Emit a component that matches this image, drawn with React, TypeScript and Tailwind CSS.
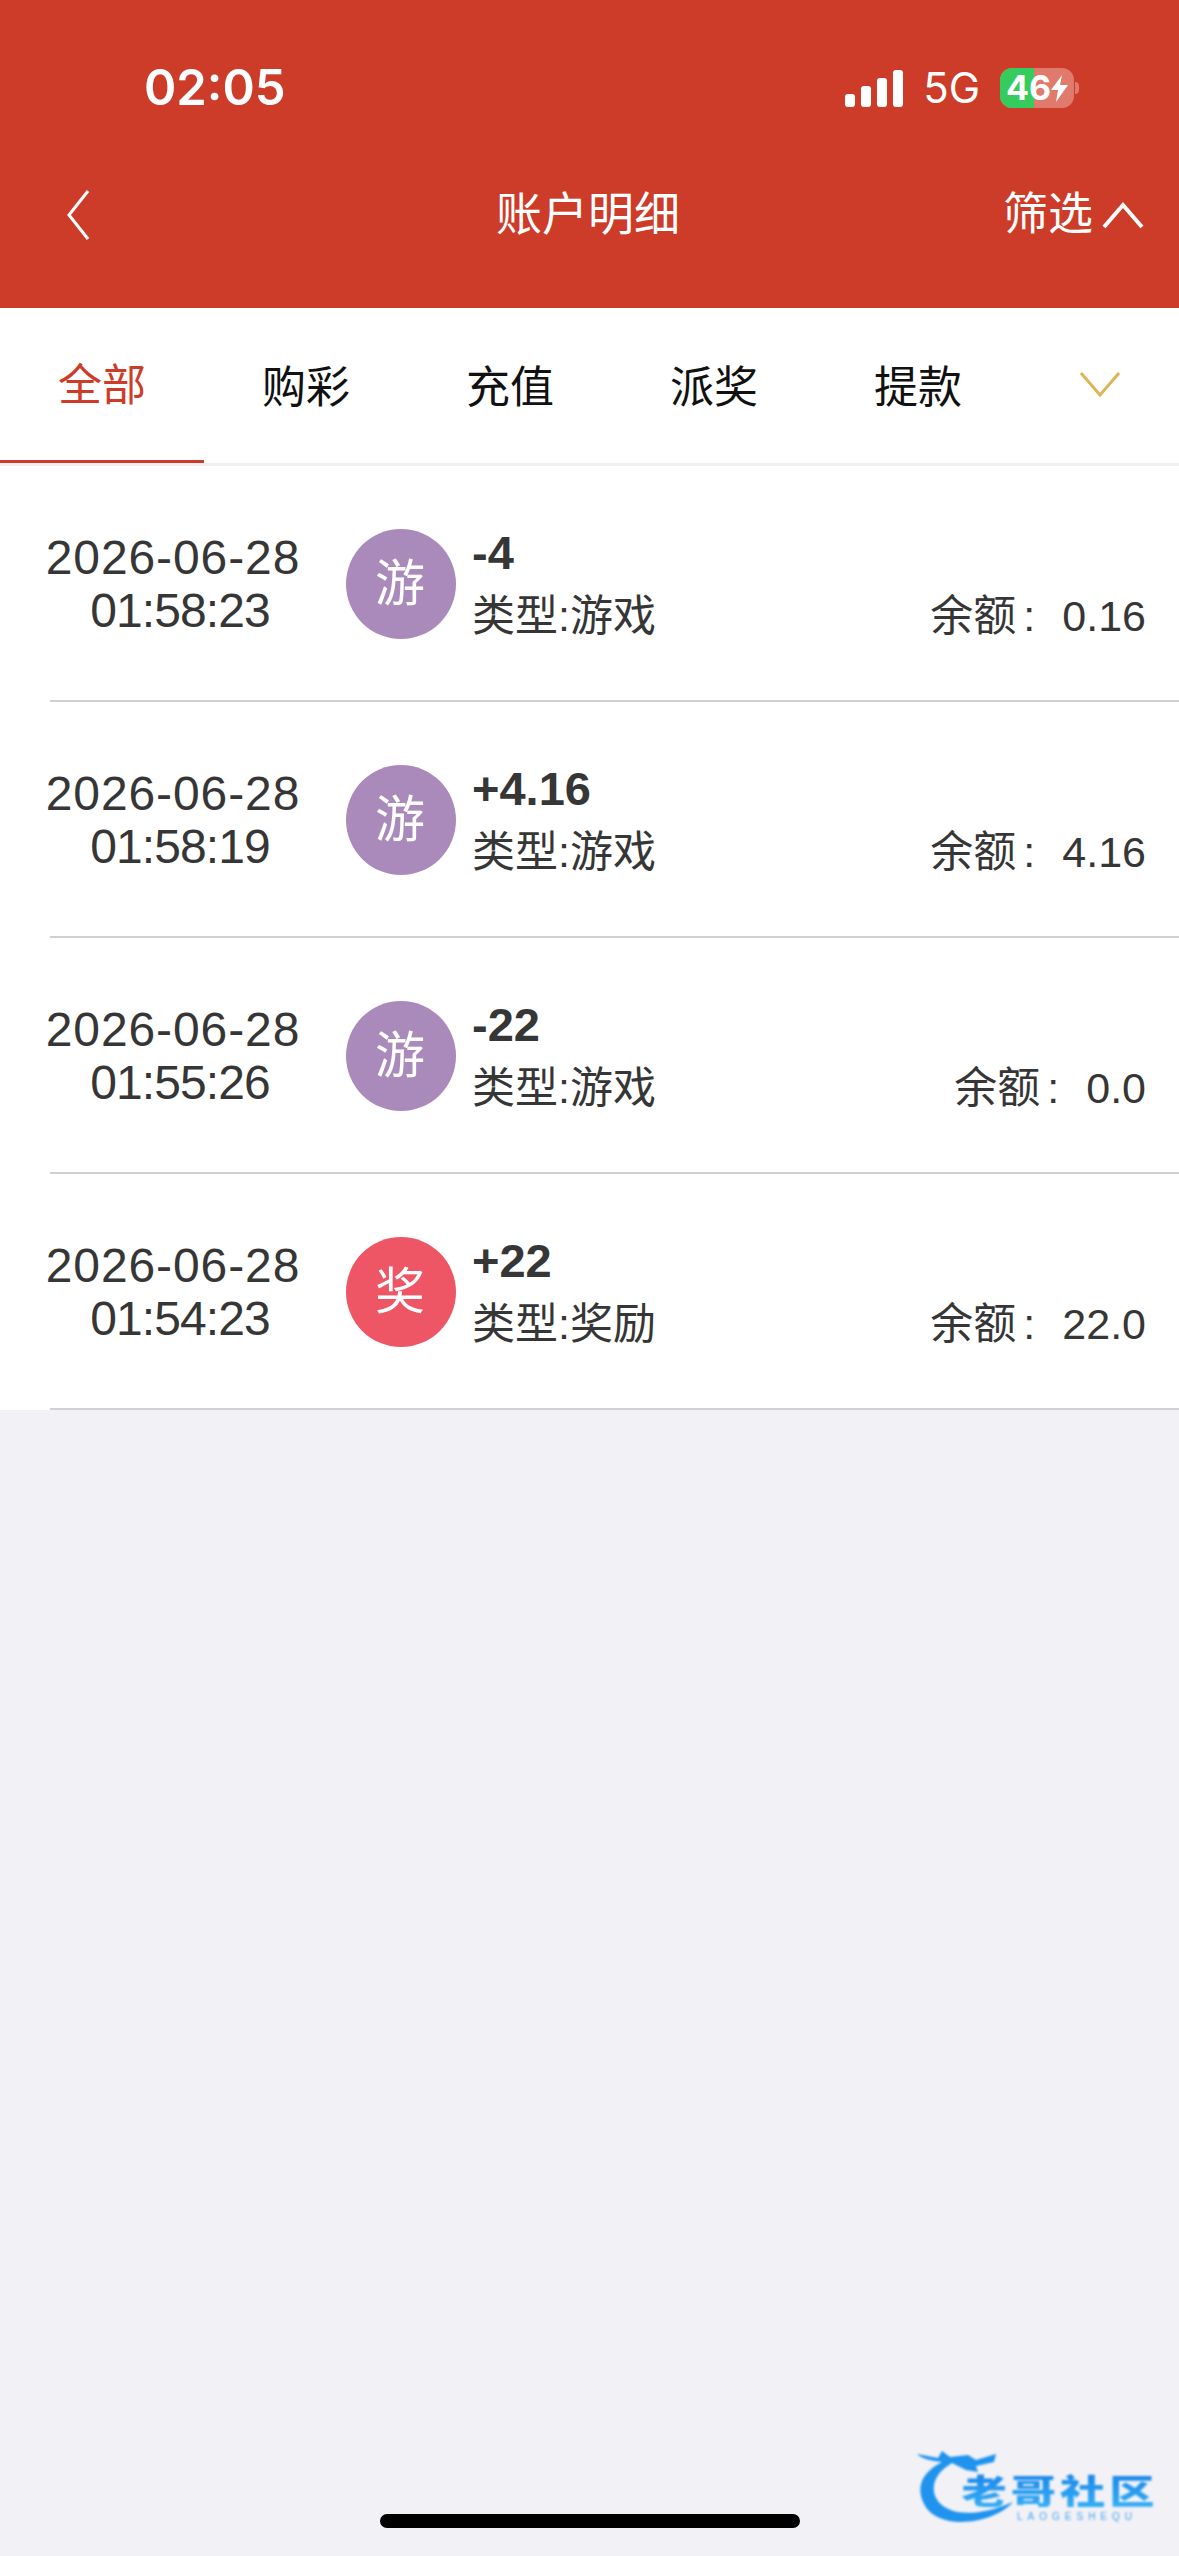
const font = "font-['Liberation_Sans','Noto_Sans_CJK_SC',sans-serif]";

const rows = [
  { date: "2026-06-28", time: "01:58:23", badge: "游", color: "bg-[#aa89bb]", amount: "-4", type: "类型:游戏", balance: "0.16" },
  { date: "2026-06-28", time: "01:58:19", badge: "游", color: "bg-[#aa89bb]", amount: "+4.16", type: "类型:游戏", balance: "4.16" },
  { date: "2026-06-28", time: "01:55:26", badge: "游", color: "bg-[#aa89bb]", amount: "-22", type: "类型:游戏", balance: "0.0" },
  { date: "2026-06-28", time: "01:54:23", badge: "奖", color: "bg-[#ee5565]", amount: "+22", type: "类型:奖励", balance: "22.0" },
];

function StatusBar() {
  return (
    <div className="flex h-[176px] items-start justify-between pt-[57px] pl-[144px] pr-[100px] text-white">
      <span className="font-['Inter',sans-serif] text-[49px] leading-[62px] font-semibold">02:05</span>
      <div className="flex h-[62px] items-center gap-[20px]">
        <svg width="58" height="37" viewBox="0 0 58 37" fill="white">
          <rect x="0" y="24" width="10" height="13" rx="3" />
          <rect x="16" y="16" width="10" height="21" rx="3" />
          <rect x="32" y="8" width="10" height="29" rx="3" />
          <rect x="48" y="0" width="10" height="37" rx="3" />
        </svg>
        <span className="font-['Inter',sans-serif] text-[42px] leading-[42px] font-normal">5G</span>
        <div className="relative h-[40px] w-[74px] overflow-hidden rounded-[12px] bg-[#df7a6c]">
          <div className="h-full w-[34px] bg-[#35cc5d]" />
          <div className="absolute inset-0 flex items-center pl-[6px] font-['Inter',sans-serif] text-[34px] font-bold leading-[40px]">46</div>
          <svg className="absolute right-[6px] top-[7px]" width="17" height="27" viewBox="0 0 17 27" fill="white">
            <path d="M11 0 L0 15 H7 L5 27 L17 10 H9 Z" />
          </svg>
        </div>
        <div className="-ml-[19px] h-[12px] w-[4px] rounded-r-full bg-[#df7a6c]" />
      </div>
    </div>
  );
}

function NavBar() {
  return (
    <div className="relative flex h-[132px] items-start justify-center">
      <svg className="absolute left-[66px] top-[13px]" width="24" height="52" viewBox="0 0 24 52" fill="none" stroke="white" strokeWidth="3">
        <path d="M22 2 L3 26 L22 50" />
      </svg>
      <span className="-ml-[3px] pt-[8px] text-[46px] leading-[60px] text-white">账户明细</span>
      <div className="absolute right-[35px] top-[9px] flex items-center">
        <span className="text-[45px] leading-[60px] text-white">筛选</span>
        <svg className="ml-[9px]" width="42" height="28" viewBox="0 0 42 28" fill="none" stroke="white" strokeWidth="4">
          <path d="M2 26 L21 4 L40 26" />
        </svg>
      </div>
    </div>
  );
}

function Tabs() {
  const tabs = ["全部", "购彩", "充值", "派奖", "提款"];
  return (
    <div className="flex h-[158px] border-b-[3px] border-[#efefef] bg-white">
      {tabs.map((t, i) => (
        <div
          key={t}
          className={
            i === 0
              ? "-mb-[3px] flex h-[155px] w-[204px] items-center justify-center border-b-[3px] border-[#cc3c28] pt-[4px] text-[44px] text-[#cc3c28]"
              : "flex h-[155px] w-[204px] items-center justify-center pt-[4px] text-[44px] text-[#111111]"
          }
        >
          {t}
        </div>
      ))}
      <div className="flex flex-1 items-center justify-center pb-[4px]">
        <svg width="40" height="26" viewBox="0 0 40 26" fill="none" stroke="#dcb45c" strokeWidth="3">
          <path d="M1 2 L20 24 L39 2" />
        </svg>
      </div>
    </div>
  );
}

function Row({ r }: { r: (typeof rows)[number] }) {
  return (
    <div className="relative flex h-[236px] items-start bg-white pt-[63px] text-[#363636]">
      <div className="w-[346px] pt-[2px] text-center text-[48px] leading-[53px]">
        <div className="tracking-[0.9px]">{r.date}</div>
        <div className="pl-[14px] tracking-[-0.9px]">{r.time}</div>
      </div>
      <div className={`flex h-[110px] w-[110px] shrink-0 items-center justify-center rounded-full pr-[2px] text-[50px] text-white ${r.color}`}>
        {r.badge}
      </div>
      <div className="ml-[16px] flex-1 pr-[33px]">
        <div className="-mt-[4px] text-[47px] leading-[56px] font-bold">{r.amount}</div>
        <div className="mt-[3px] flex items-center justify-between text-[43px] leading-[64px]">
          <span>{r.type}</span>
          <span className="flex items-center">
            <span>余额</span>
            <span className="w-[46px] pl-[7px] text-left">:</span>
            <span>{r.balance}</span>
          </span>
        </div>
      </div>
      <div className="absolute bottom-0 left-[50px] right-0 h-[2px] bg-[#d0d0d3]" />
    </div>
  );
}

function Logo() {
  return (
    <div className="absolute left-[916px] top-[2448px] h-[80px] w-[250px] blur-[1px]">
      <svg className="absolute left-0 top-0" width="100" height="80" viewBox="0 0 100 80">
        <path d="M1 6 L22 10 L26 3 L34 9 L52 7 L60 12 L80 6 L78 14 L60 18 L62 24 L50 22 L36 15 C20 24 14 38 20 50 C30 68 60 70 97 54 C78 76 22 84 8 56 C-2 36 10 22 26 14 C16 13 6 11 1 6 Z" fill="#1f93ee" />
      </svg>
      <span className="absolute left-[70px] top-[25px] origin-center scale-x-[1.33] bg-linear-to-b from-[#1a86ea] to-[#35aef5] bg-clip-text font-['Noto_Sans_CJK_SC',sans-serif] text-[34px] leading-[34px] font-black tracking-[3px] whitespace-nowrap text-transparent">老哥社区</span>
      <span className="absolute left-[101px] top-[64px] text-[10px] leading-[10px] tracking-[5px] whitespace-nowrap text-[#4aa6ee]">LAOGESHEQU</span>
    </div>
  );
}

export default function App() {
  return (
    <div className={`relative h-[2556px] w-[1179px] overflow-hidden bg-[#f1f1f6] ${font}`}>
      <div className="h-[308px] bg-[#cc3c28]">
        <StatusBar />
        <NavBar />
      </div>
      <Tabs />
      <div>
        {rows.map((r) => (
          <Row key={r.time} r={r} />
        ))}
      </div>
      <Logo />
      <div className="absolute bottom-[28px] left-[380px] h-[14px] w-[420px] rounded-full bg-black" />
    </div>
  );
}
